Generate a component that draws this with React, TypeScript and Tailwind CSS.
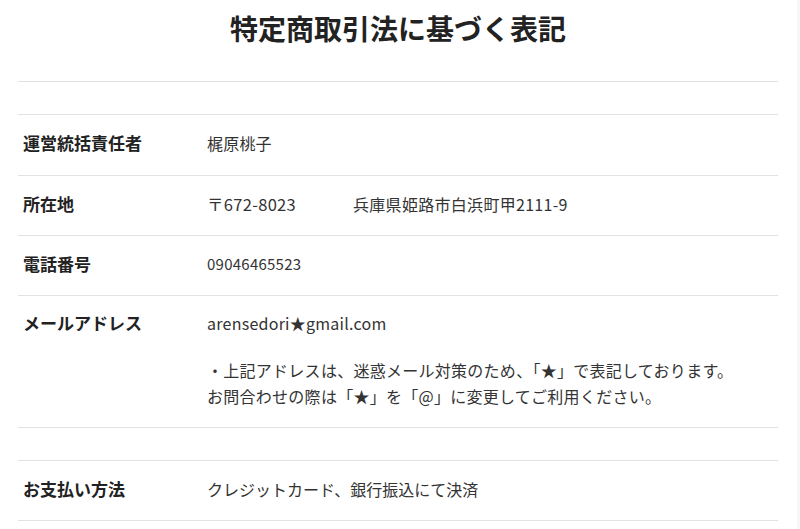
import React from "react";

const font = { fontFamily: '"Noto Sans CJK JP", "Noto Sans", sans-serif' };

function Row({ label, children, top = "pt-[16px]", bottom = "pb-[19px]" }: { label: string; children: React.ReactNode; top?: string; bottom?: string }) {
  return (
    <div className={`flex border-b border-[#e3e3e3] ${top} ${bottom}`}>
      <div className="w-[189px] shrink-0 pl-[5px] text-[17px] font-bold leading-[24px] text-[#222]">{label}</div>
      <div className="flex-1 text-[16px] leading-[24px] text-[#333]">{children}</div>
    </div>
  );
}

export default function App() {
  return (
    <div className="relative h-[529px] w-[800px] overflow-hidden bg-white" style={font}>
      <div className="absolute right-0 top-0 h-full w-[3px] bg-[#f7f7f7]" />
      <div className="flex h-[81px] items-start justify-center pt-[8px]">
        <h1 className="pr-[4px] text-[28px] font-bold leading-[40px] text-[#222]">特定商取引法に基づく表記</h1>
      </div>
      <div className="ml-[18px] w-[760px]">
        <div className="h-[34px] border-y border-[#e3e3e3]" />
        <Row label="運営統括責任者" bottom="pb-[20px]">
          <div className="h-[24px] text-[16px] leading-[24px] tracking-[0.2px]">梶原桃子</div>
        </Row>
        <Row label="所在地">
          <div className="flex h-[24px] leading-[24px]">
            <div className="w-[146px] text-[16.5px] tracking-[0.3px]">〒672-8023</div>
            <div className="tracking-[0.3px]">兵庫県姫路市白浜町甲2111-9</div>
          </div>
        </Row>
        <Row label="電話番号">
          <div className="h-[24px] text-[15px] leading-[24px] tracking-[0.25px]">09046465523</div>
        </Row>
        <Row label="メールアドレス" top="pt-[15px]" bottom="pb-[18px]">
          <div className="h-[24px] text-[16px] leading-[24px] tracking-[0.25px]">arensedori★gmail.com</div>
          <p className="mt-[22px] leading-[26px] tracking-[0.27px]">
            ・上記アドレスは、迷惑メール対策のため、「★」で表記しております。
            <br />
            お問合わせの際は「★」を「@」に変更してご利用ください。
          </p>
        </Row>
        <div className="h-[33px] border-b border-[#e3e3e3]" />
        <Row label="お支払い方法">
          <div className="h-[24px] leading-[24px]">クレジットカード、銀行振込にて決済</div>
        </Row>
      </div>
    </div>
  );
}
